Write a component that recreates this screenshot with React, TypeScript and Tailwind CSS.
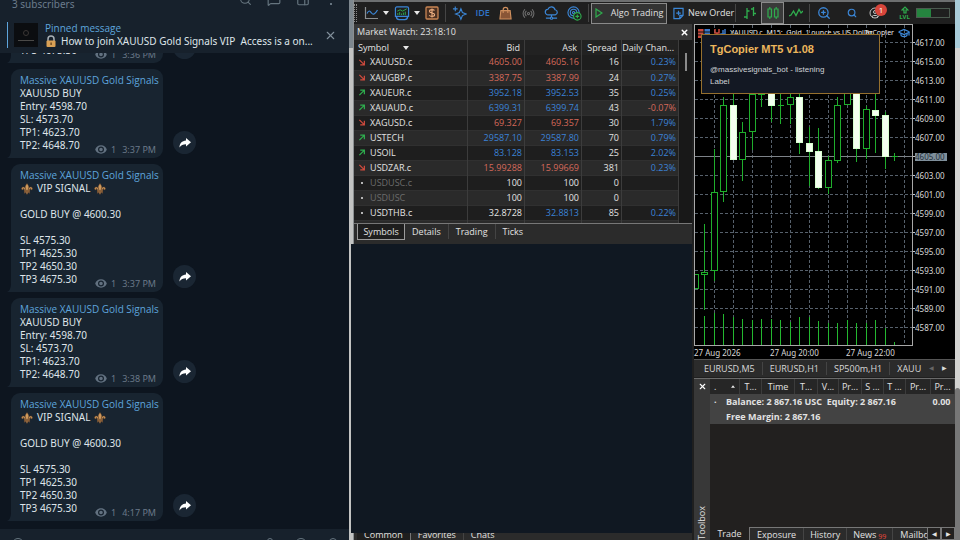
import React from "react";
import {
  GraduationCap,
  MessageSquare,
  PanelRight,
  Radio,
  Search,
  X,
  ZoomIn,
  CircleUser,
} from "lucide-react";

type Message = { kind: "buy" | "vip"; time: string };

const messages: Message[] = [
  { kind: "vip", time: "3:36 PM" },
  { kind: "buy", time: "3:37 PM" },
  { kind: "vip", time: "3:37 PM" },
  { kind: "buy", time: "3:38 PM" },
  { kind: "vip", time: "4:17 PM" },
];

const buyLines = ["XAUUSD BUY", "Entry: 4598.70", "SL: 4573.70", "TP1: 4623.70", "TP2: 4648.70"];
const vipLines = ["", "GOLD BUY @ 4600.30", "", "SL 4575.30", "TP1 4625.30", "TP2 4650.30", "TP3 4675.30"];

function Fleur() {
  return (
    <svg viewBox="0 0 24 24" className="h-3 w-3 shrink-0" fill="#d09a5c" stroke="#6d4525" strokeWidth="0.8" aria-hidden="true">
      <path d="M12 1c-2 3-3.500 5-3.500 7.500 0 2.500 1.500 4 2 6.500h3c.5-2.500 2-4 2-6.500C15.500 6 14 4 12 1z" />
      <path d="M9.500 15C9 11 7.500 8 4.500 8 2 8 .8 10 1.200 12c.4 1.600 2.300 2 3.300.8.6-.8 0-1.800-.8-1.600C5.500 10 7 12 7 15z" />
      <path d="M14.500 15c.5-4 2-7 5-7 2.500 0 3.700 2 3.300 4-.4 1.600-2.300 2-3.300.8-.6-.8 0-1.800.8-1.600C18.500 10 17 12 17 15z" />
      <path d="M6.500 15h11v2.200h-11zM10.500 17.200h3c0 2 .5 3.300-1.500 5.800-2-2.500-1.500-3.800-1.500-5.800zM9.500 17.200c0 2-1 3.500-3 3.500.8-1 1-2 1-3.500zM14.500 17.200c0 2 1 3.500 3 3.500-.8-1-1-2-1-3.500z" />
    </svg>
  );
}

function Bubble({ kind, time }: Message) {
  return (
    <article className="flex items-end gap-2.5 pl-[11px]">
      <div className="relative w-[152px] rounded-t-[9px] rounded-br-[9px] bg-[#182430] px-[9px] pt-[5px] pb-[6px] leading-[13px] text-[#dfe5ea]">
        <svg viewBox="0 0 6 8" className="absolute bottom-0 -left-1 h-2 w-1.5" fill="#182430" aria-hidden="true">
          <path d="M4 0v8H0c2.500-1 4-4 4-8z" />
        </svg>
        <h2 className="whitespace-nowrap font-['Open_Sans','Noto_Sans',sans-serif] font-medium text-[#5ea5dc]">Massive XAUUSD Gold Signals</h2>
        {kind === "vip" && (
          <p className="flex h-[13px] items-center gap-1 pl-px">
            <Fleur /> VIP SIGNAL <Fleur />
          </p>
        )}
        {(kind === "vip" ? vipLines : buyLines).map((line, i) => (
          <p key={i} className="h-[13px] whitespace-nowrap">
            {line}
          </p>
        ))}
        <p className="absolute right-[7px] bottom-[2px] flex items-center gap-1 text-[9px] text-[#6a7988]">
          <svg viewBox="0 0 12 9" className="h-[9px] w-3" aria-hidden="true">
            <path
              fill="#627180"
              fillRule="evenodd"
              d="M6 0.300C3 .3 1 2.200.2 4.500 1 6.800 3 8.700 6 8.700s5-1.900 5.800-4.200C11 2.200 9 .3 6 .3zM6 7.500a3 3 0 1 1 0-6 3 3 0 0 1 0 6zM6 2.700a1.800 1.800 0 1 0 0 3.600 1.800 1.800 0 0 0 0-3.600z"
            />
          </svg>
          <span>1</span>
          <time className="pl-0.5">{time}</time>
        </p>
      </div>
      <button aria-label="Forward" className="mb-1 flex h-[23px] w-[23px] items-center justify-center rounded-full bg-[#1a2633]">
        <svg viewBox="0 0 12 10" className="h-2.5 w-3" fill="#fff" aria-hidden="true">
          <path d="M7 0l5 4.300L7 8.600V6.200C4 6.200 2 7 .5 9.500.5 5.500 3 2.800 7 2.500z" />
        </svg>
      </button>
    </article>
  );
}

function Chat() {
  return (
    <section className="flex h-full min-w-0 flex-col overflow-hidden bg-[#0d151f] font-['Noto_Sans','Open_Sans',sans-serif] text-[10px]">
      <header className="flex h-[17px] shrink-0 items-start bg-[#17212c] pr-3 pl-3">
        <p className="-mt-1 flex-1 leading-[16px] text-[#6b7c8c]">3 subscribers</p>
        <div className="-mt-2.5 flex gap-[15px] pt-0.5 text-[#66757f]">
          <button aria-label="Search"><Search className="h-[13px] w-[13px]" /></button>
          <button aria-label="Discuss"><MessageSquare className="h-[15px] w-[14px]" /></button>
          <button aria-label="Side panel"><PanelRight className="h-[15px] w-[14px]" /></button>
          <button aria-label="More" className="flex h-[13px] w-3 items-end justify-center">
            <span className="h-[2px] w-[2px] rounded-full bg-[#82909c]" />
          </button>
        </div>
      </header>
      <div className="flex h-9 shrink-0 items-center bg-[#17212c] pr-3 pl-[7px]">
        <span className="h-[26px] w-px shrink-0 bg-[#5ea5dc]" />
        <span className="ml-1.5 flex h-6 w-6 shrink-0 flex-col items-center justify-center gap-1 bg-[#0b0d10]">
          <span className="h-1.5 w-1.5 rounded-sm border border-[#3a3634]" />
          <span className="h-px w-4 bg-[#4b4a48]" />
        </span>
        <div className="ml-[7px] min-w-0 flex-1 pb-px leading-[13px]">
          <h1 className="font-['Open_Sans','Noto_Sans',sans-serif] font-medium text-[#5ea5dc]">Pinned message</h1>
          <p className="flex items-center gap-1 whitespace-pre text-[#dfe5ea]">
            <svg viewBox="0 0 12 13" className="h-[13px] w-3 shrink-0" aria-hidden="true">
              <path d="M3 6V4a3 3 0 0 1 6 0v2" fill="none" stroke="#a9b0b5" strokeWidth="1.500" />
              <rect x="1.500" y="5.500" width="9" height="6.500" rx="1" fill="#d9a055" />
              <rect x="5.500" y="7.500" width="1.200" height="2.500" fill="#5b3a17" />
            </svg>
            How to join XAUUSD Gold Signals VIP  Access is a on...
          </p>
        </div>
        <button aria-label="Close pinned message" className="text-[#82909c]">
          <X className="h-[13px] w-[13px]" strokeWidth={2} />
        </button>
      </div>
      <div className="flex min-h-0 flex-1 flex-col justify-end gap-[6px] overflow-hidden pb-2">
        {messages.map((m, i) => (
          <Bubble key={i} {...m} />
        ))}
      </div>
      <footer className="flex h-[11px] shrink-0 items-start justify-between overflow-hidden bg-[#17212c] px-3 pt-[9px]">
        <span className="h-3 w-3 rounded-full border border-[#66757f]" />
        <span className="flex gap-[22px]">
          <span className="h-3 w-1.5 rounded-full border border-[#66757f]" />
          <span className="h-3 w-3 rounded-full border border-[#66757f]" />
          <span className="h-3 w-2 rounded-full border border-[#66757f]" />
        </span>
      </footer>
    </section>
  );
}

function Sep() {
  return <span className="mx-0.5 h-[18px] w-px shrink-0 bg-[#454545]" />;
}

function Tool({ label, children, active }: { label: string; children: React.ReactNode; active?: boolean }) {
  return (
    <button
      aria-label={label}
      className={
        "flex h-[22px] w-[23px] shrink-0 items-center justify-center " +
        (active ? "border border-[#8a8a8a] bg-[#3a3a3a]" : "")
      }
    >
      {children}
    </button>
  );
}

function Caret() {
  return (
    <svg viewBox="0 0 6 4" className="h-1 w-1.5 shrink-0" fill="#e8e8e8" aria-hidden="true">
      <path d="M0 0h6L3 4z" />
    </svg>
  );
}

function Toolbar() {
  return (
    <div role="toolbar" className="flex h-6 shrink-0 items-center border-t-2 border-[#6d6f70] bg-[#1f1f1f] text-[9px] text-[#e0e0e0]">
      <span className="h-[18px] w-[3px] shrink-0 border-x border-dotted border-[#8a8a8a]" />
      <button aria-label="Chart type" className="flex w-8 shrink-0 items-center justify-end gap-1">
        <svg viewBox="0 0 16 14" className="h-[14px] w-4" fill="none" strokeWidth="1.200">
          <path d="M2.500 1v11.500H15" stroke="#8b8f92" />
          <path d="M4 7.500c2-4 3-2.500 4.500-.5S12 8.500 14.500 4" stroke="#3b86d6" />
        </svg>
        <Caret />
      </button>
      <button aria-label="Indicators" className="flex w-[31px] shrink-0 items-center justify-end gap-1">
        <svg viewBox="0 0 16 16" className="h-[15px] w-4" fill="none">
          <path d="M1 2.500A1.500 1.500 0 0 1 2.500 1h11A1.500 1.500 0 0 1 15 2.500V11H1z" stroke="#3b86d6" strokeWidth="1.300" />
          <path d="M2 11c0 2 1 3.500 3 3.500h6c2 0 3-1.500 3-3.500" stroke="#3b86d6" strokeWidth="1.500" />
          <path d="M3 5.500l3-1.500 2.500 1.500L13 3M3.500 9.500v-2M5.500 9.500v-3M7.500 9.500V8M9.500 9.500V7M11.500 9.500V6" stroke="#2fae4e" />
        </svg>
        <Caret />
      </button>
      <Tool label="Market">
        <svg viewBox="0 0 14 14" className="h-[14px] w-[14px]">
          <rect x="1" y="1" width="12" height="12" rx="1" fill="#4a3021" stroke="#c98553" strokeWidth="1.300" />
          <path d="M9.500 4.500C9 3.800 8 3.600 7 3.600c-1.400 0-2.500.5-2.500 1.700C4.500 7.800 9.600 6.300 9.600 8.800c0 1.200-1.200 1.700-2.600 1.700-1.200 0-2.200-.4-2.700-1.200M7 2.400v9.200" fill="none" stroke="#f0b183" strokeWidth="1.100" />
        </svg>
      </Tool>
      <Sep />
      <Tool label="AI assistant">
        <svg viewBox="0 0 16 16" className="h-[15px] w-[15px]" fill="none" stroke="#3b86d6" strokeWidth="1.200">
          <path d="M9.500 3l1.600 4 4 1.600-4 1.600-1.600 4-1.600-4-4-1.600 4-1.600zM3.500.5v5M1 3h5" />
        </svg>
      </Tool>
      <Tool label="IDE"><span className="text-[9px] font-semibold text-[#2f74c8]">IDE</span></Tool>
      <Tool label="Shop">
        <svg viewBox="0 0 14 15" className="h-[14px] w-[13px]">
          <path d="M2 5h10l1 9H1z" fill="#8a5636" stroke="#d0905e" strokeWidth="1.200" />
          <path d="M4.500 7.500V4a2.500 2.500 0 0 1 5 0v3.500" fill="none" stroke="#d0905e" strokeWidth="1.200" />
        </svg>
      </Tool>
      <Tool label="Signals"><Radio className="h-[13px] w-[13px] text-[#6c6c6c]" /></Tool>
      <Tool label="Virtual hosting">
        <svg viewBox="0 0 16 15" className="h-[14px] w-[15px]" fill="none" stroke="#3b86d6" strokeWidth="1.300">
          <path d="M4.500 9.500a3 3 0 0 1-.3-6A4 4 0 0 1 11.800 4a2.800 2.800 0 0 1 .2 5.500zM8 9.500v2.500M2 13h4.500M9.500 13H14" />
          <circle cx="8" cy="13" r="1.200" />
        </svg>
      </Tool>
      <Tool label="Network">
        <svg viewBox="0 0 16 16" className="h-[15px] w-[15px]" fill="none" stroke="#3b86d6" strokeWidth="1.200">
          <circle cx="7" cy="7" r="6" />
          <circle cx="7" cy="7" r="3.500" />
          <circle cx="7" cy="7" r="1.200" />
          <circle cx="11" cy="11" r="4" fill="#1f1f1f" stroke="#2fae4e" />
          <path d="M11 9v4M9 11h4" stroke="#2fae4e" />
        </svg>
      </Tool>
      <Sep />
      <button className="flex h-[21px] w-[76px] shrink-0 items-center justify-center gap-2 whitespace-nowrap border border-[#8a8a8a] bg-[#333]">
        <svg viewBox="0 0 8 10" className="h-2.5 w-2" fill="none" stroke="#2fae4e" strokeWidth="1.200">
          <path d="M1 1l6 4-6 4z" />
        </svg>
        Algo Trading
      </button>
      <button className="flex w-[66px] shrink-0 items-center gap-1 whitespace-nowrap pl-1.5">
        <svg viewBox="0 0 12 13" className="h-[13px] w-[11px] shrink-0" fill="none" stroke="#3b86d6" strokeWidth="1.300">
          <path d="M1 1h10v7.500L7.500 12H1zM11 8.500H7.500V12M6 3.500v5M3.500 6h5" />
        </svg>
        New Order
      </button>
      <Sep />
      <Tool label="Bars">
        <svg viewBox="0 0 14 14" className="h-[14px] w-[14px]" fill="none" stroke="#2fae4e" strokeWidth="1.300">
          <path d="M4 2v11M1 11h3M4 5h2.500M10.500 1v9M8 3h2.500M10.500 7.500H13" />
        </svg>
      </Tool>
      <Tool label="Candlesticks" active>
        <svg viewBox="0 0 14 14" className="h-[14px] w-[14px]" fill="none" stroke="#2fae4e" strokeWidth="1.200">
          <path d="M2 3h3.500v8H2zM8.500 3H12v8H8.500zM3.800 1v2M3.800 11v2M10.200 1v2M10.200 11v2" />
        </svg>
      </Tool>
      <Tool label="Line">
        <svg viewBox="0 0 14 10" className="h-2.5 w-[14px]" fill="none" stroke="#2fae4e" strokeWidth="1.300">
          <path d="M0 8l2-1 2.500-4L7 7.500l3-6L12 5l2-2" />
        </svg>
      </Tool>
      <Sep />
      <Tool label="Zoom in"><ZoomIn className="h-[14px] w-[14px] text-[#3b86d6]" strokeWidth={2.200} /></Tool>
      <span className="flex-1" />
      <Tool label="Search"><Search className="h-2.5 w-2.5 text-[#3b86d6]" strokeWidth={2.800} /></Tool>
      <button aria-label="Account, 1 notification" className="relative flex h-[22px] w-[30px] shrink-0 items-center pl-1.5">
        <CircleUser className="h-3 w-3 text-[#c4c4c4]" />
        <span className="absolute top-0.5 left-3 h-3 w-3 rounded-full bg-[#d8453a] text-center text-[8px] leading-[12px] text-white">1</span>
      </button>
      <button aria-label="Level" className="flex w-[23px] shrink-0 flex-col items-center text-[6px] leading-[6px] font-bold text-[#2fae4e]">
        <svg viewBox="0 0 8 8" className="h-2 w-2" fill="none" stroke="#2fae4e" strokeWidth="1.200">
          <path d="M1 4l3-3 3 3H5v3H3V4z" />
        </svg>
        LVL
      </button>
      <span className="mr-[5px] h-[10px] w-[34px] shrink-0 border border-[#4c5a50]">
        <span className="block h-full w-[14px] bg-[#25843f]" />
      </span>
    </div>
  );
}

type Quote = [dir: "up" | "down" | "none", symbol: string, bid: string, ask: string, spread: string, change: string, bidTone: string, askTone: string];

const R = "text-[#d5695a]";
const B = "text-[#3b82d6]";
const W = "text-[#e6e6e6]";

const quotes: Quote[] = [
  ["down", "XAUUSD.c", "4605.00", "4605.16", "16", "0.23%", R, R],
  ["down", "XAUGBP.c", "3387.75", "3387.99", "24", "0.27%", R, R],
  ["up", "XAUEUR.c", "3952.18", "3952.53", "35", "0.25%", B, B],
  ["up", "XAUAUD.c", "6399.31", "6399.74", "43", "-0.07%", B, B],
  ["down", "XAGUSD.c", "69.327", "69.357", "30", "1.79%", R, R],
  ["up", "USTECH", "29587.10", "29587.80", "70", "0.79%", B, B],
  ["up", "USOIL", "83.128", "83.153", "25", "2.02%", B, B],
  ["down", "USDZAR.c", "15.99288", "15.99669", "381", "0.23%", R, R],
  ["none", "USDUSC.c", "100", "100", "0", "", W, W],
  ["none", "USDUSC", "100", "100", "0", "", W, W],
  ["none", "USDTHB.c", "32.8728", "32.8813", "85", "0.22%", W, B],
  ["down", "USDSGD.c", "1.27124", "1.27118", "14", "-0.01%", W, R],
];

function Direction({ dir }: { dir: Quote[0] }) {
  if (dir === "none") return <span className="mx-[3px] h-[2px] w-[2px] shrink-0 bg-[#b5b5b5]" />;
  return (
    <svg
      viewBox="0 0 8 8"
      className="h-[7px] w-2 shrink-0"
      fill="none"
      stroke={dir === "up" ? "#2fae4e" : "#cf4b3d"}
      strokeWidth="1.400"
      aria-label={dir}
    >
      <path d={dir === "up" ? "M1 7l5.500-5.500M2 1.300h4.700V6" : "M1 1l5.500 5.500M2 6.700h4.700V2"} />
    </svg>
  );
}

function MarketWatch() {
  const tabs = ["Details", "Trading", "Ticks"];
  return (
    <section className="flex h-full min-w-0 flex-col bg-[#2b2b2b] text-[9px] text-[#e2e2e2]">
      <header className="flex h-4 shrink-0 items-center justify-between bg-[#383838] pr-[3px] pl-[3px]">
        <h1>Market Watch: 23:18:10</h1>
        <button aria-label="Close Market Watch"><X className="h-[9px] w-[9px] text-white" strokeWidth={4} /></button>
      </header>
      <div className="flex h-[184px] shrink-0 overflow-hidden border-b border-[#777] bg-[#1c1c1c]">
        <div className="min-w-0 flex-1">
          <table className="w-full table-fixed border-collapse">
            <colgroup>
              <col />
              <col className="w-[57px]" />
              <col className="w-[57px]" />
              <col className="w-[40px]" />
              <col className="w-[57px]" />
            </colgroup>
            <thead>
              <tr className="h-[15px] bg-[#222] text-right [&>th]:border-r [&>th]:border-[#3c3c3c] [&>th]:p-0 [&>th]:pr-1 [&>th]:leading-[14px] [&>th]:font-normal [&>th]:whitespace-nowrap">
                <th className="text-left">
                  <span className="flex items-center gap-3.5 pl-1">Symbol <Caret /></span>
                </th>
                <th>Bid</th>
                <th>Ask</th>
                <th>Spread</th>
                <th>Daily Chan...</th>
              </tr>
            </thead>
            <tbody>
              {quotes.map(([dir, symbol, bid, ask, spread, change, bt, at], i) => (
                <tr
                  key={symbol}
                  className={
                    "h-[15px] border-b border-[#303030] text-right [&>td]:border-r [&>td]:border-[#3c3c3c] [&>td]:p-0 [&>td]:pr-0.5 [&>td]:leading-[14px] " +
                    (i % 2 ? "bg-[#2a2a2a]" : "bg-[#1e1e1e]")
                  }
                >
                  <td>
                    <span className={"flex items-center gap-1 pl-1 " + (symbol.startsWith("USDUSC") ? "text-[#6c6c6c]" : "")}>
                      <Direction dir={dir} />
                      {symbol}
                    </span>
                  </td>
                  <td className={bt}>{bid}</td>
                  <td className={at}>{ask}</td>
                  <td>{spread}</td>
                  <td className={change.startsWith("-") ? R : B}>{change}</td>
                </tr>
              ))}
            </tbody>
          </table>
        </div>
        <div className="flex w-[13px] shrink-0 justify-center bg-[#181818] pt-[13px]">
          <span className="h-[18px] w-[2px] bg-[#8a8a8a]" />
        </div>
      </div>
      <nav className="flex h-5 shrink-0 items-start pl-[3px]">
        <button className="h-4 w-12 border border-t-0 border-[#9a9a9a] bg-[#1e1e1e] leading-[14px]">Symbols</button>
        {tabs.map((t) => (
          <button key={t} className="border-r border-[#444] px-[7px] leading-[15px] last:border-0">
            {t}
          </button>
        ))}
      </nav>
      <div className="-ml-[3px] min-h-0 flex-1 bg-[#101822]" />
      <nav className="flex h-[7px] shrink-0 items-end overflow-hidden bg-[#2b2b2b] pl-[3px] leading-[11px]">
        <button className="border-r border-[#777] bg-[#1e1e1e] px-[7px]">Common</button>
        <button className="border-r border-[#444] px-[7px]">Favorites</button>
        <button className="px-[7px]">Chats</button>
      </nav>
    </section>
  );
}

type Candle = [x: number, high: number, top: number, bottom: number, low: number, filled?: boolean];

const candles: Candle[] = [
  [0, 249, 249, 264, 264],
  [9, 199, 247, 250, 285],
  [19, 124, 167, 246, 256],
  [28, 72, 80, 167, 177],
  [38, 66, 80, 135, 135, true],
  [47, 97, 107, 135, 156],
  [57, 60, 69, 107, 125],
  [66, 60, 62, 70, 82],
  [76, 60, 66, 81, 97, true],
  [85, 66, 80, 80, 99],
  [95, 66, 72, 80, 99],
  [104, 66, 72, 118, 129, true],
  [114, 102, 118, 127, 161, true],
  [123, 103, 126, 163, 164, true],
  [133, 131, 135, 163, 169],
  [142, 72, 80, 136, 138],
  [152, 60, 66, 80, 80],
  [161, 60, 66, 124, 137, true],
  [171, 81, 84, 124, 134],
  [180, 68, 85, 91, 128, true],
  [190, 87, 90, 132, 144, true],
  [199, 128, 131, 131, 136],
];

const volumes = [29, 32, 31, 28, 26, 25, 26, 26, 25, 23, 28, 28, 24, 22, 22, 25, 22, 22, 25, 17, 3];
const prices = Array.from({ length: 16 }, (_, i) => 4617 - i * 2);

function Plot() {
  return (
    <svg viewBox="0 0 217 320" className="h-[320px] w-[217px]" shapeRendering="crispEdges" role="img" aria-label="XAUUSD.c M15 candlestick chart">
      <g stroke="#56606b" strokeDasharray="3 2">
        {Array.from({ length: 11 }, (_, i) => (
          <path key={"v" + i} d={`M${19.5 + i * 19} 0V320`} />
        ))}
        {prices.map((p, i) => (
          <path key={p} d={`M0 ${17.5 + i * 19}H217`} />
        ))}
      </g>
      <path d="M0 131.500H217" stroke="#7d8288" />
      {candles.map(([x, high, top, bottom, low, filled]) => (
        <g key={x} stroke="#1fae2c">
          <path d={`M${x + 0.5} ${high}V${top}M${x + 0.5} ${bottom}V${low}`} />
          {top === bottom ? (
            <path d={`M${x - 2} ${top + 0.5}h6`} />
          ) : (
            <rect
              x={x - 2.5}
              y={top + 0.5}
              width="6"
              height={bottom - top - 1}
              fill={filled ? "#f4fff0" : "#000"}
              stroke={filled ? "#d8ffd0" : "#1fae2c"}
            />
          )}
        </g>
      ))}
      {volumes.map((v, i) => (
        <path key={i} d={`M${Math.floor(9.5 + i * 9.5) + 0.5} 320v-${v}`} stroke="#23b82f" />
      ))}
    </svg>
  );
}

function ChartPanel() {
  return (
    <section className="relative shrink-0 bg-black font-['Noto_Sans',sans-serif] text-[8px] text-[#d8d8d8]">
      <div className="flex">
        <div className="border border-[#a8a8a8]">
          <Plot />
        </div>
        <ol className="flex h-[322px] flex-col pt-[9px]">
          {prices.map((p) => (
            <li key={p} className="flex h-[19px] items-center">
              <span className="h-px w-[2px] bg-[#c8c8c8]" />
              <span className={p === 4605 ? "bg-[#7f8f9b] pr-0.5 leading-[8px] text-[#25303a]" : "leading-[8px]"}>{p}.00</span>
            </li>
          ))}
        </ol>
      </div>
      <div className="grid w-[228px] grid-cols-3 pt-px leading-[12px] whitespace-nowrap">
        <time>27 Aug 2026</time>
        <time>27 Aug 20:00</time>
        <time>27 Aug 22:00</time>
      </div>
      <div className="absolute top-[3px] left-1 flex w-[212px] items-center gap-1 leading-[12px] whitespace-nowrap text-[#e8e8e8]">
        <svg viewBox="0 0 12 9" className="h-[9px] w-3 shrink-0" aria-hidden="true">
          <path d="M0 0h5.500v9H0z" fill="#c9493d" />
          <path d="M6.500 0H12v9H6.500z" fill="#3b78c9" />
          <path d="M0 3h12M0 6h12" stroke="#111" />
        </svg>
        <svg viewBox="0 0 12 9" className="h-[9px] w-3 shrink-0" fill="none" strokeWidth="1.500" aria-hidden="true">
          <path d="M1 0v4h4V0M3 4v5" stroke="#c9493d" />
          <path d="M7 9V5h4V0M9 5V1" stroke="#3b78c9" />
        </svg>
        <h2 className="min-w-0 flex-1 text-[7px]">XAUUSD.c, M15:&nbsp; Gold, 1 ounce vs US Dollar</h2>
        <span className="text-[7px]">TgCopier</span>
        <GraduationCap className="h-3 w-3 shrink-0 text-[#3b86d6]" strokeWidth={2.500} />
      </div>
      <aside className="absolute top-[10px] left-[7px] h-[60px] w-[179px] border border-[#96702e] bg-[#131823] px-2 font-['Liberation_Sans',Arial,sans-serif] text-[#cfd2d6]">
        <h3 className="pt-2 text-[11px] leading-[13px] font-bold text-[#ecb65c]">TgCopier MT5 v1.08</h3>
        <p className="pt-2 leading-[12px]">@massivesignals_bot - listening</p>
        <p className="leading-[12px]">Label</p>
      </aside>
    </section>
  );
}

const columns: [string, string][] = [
  ["T...", "w-[22px]"],
  ["Time", "w-[33px]"],
  ["T...", "w-[23px]"],
  ["V...", "w-[21px]"],
  ["Pr...", "w-[23px]"],
  ["S ...", "w-[22px]"],
  ["T ...", "w-[22px]"],
  ["Pr...", "w-[25px]"],
  ["Pr...", "w-[24px]"],
];

function Toolbox() {
  return (
    <section className="flex min-h-0 flex-1 border-t border-[#6a6a6a] text-[9px] text-[#e2e2e2]">
      <div className="flex w-4 shrink-0 flex-col items-center justify-between bg-[#383838] pt-[3px]">
        <button aria-label="Close Toolbox"><X className="h-[9px] w-[9px] text-white" strokeWidth={3} /></button>
        <h2 className="rotate-180 leading-[12px] [writing-mode:vertical-rl]">Toolbox</h2>
      </div>
      <div className="flex min-w-0 flex-1 flex-col bg-[#22201f]">
        <table className="w-full table-fixed border-collapse">
          <thead>
            <tr className="h-[15px] bg-[#262626] text-center [&>th]:border-r [&>th]:border-[#3c3c3c] [&>th]:p-0 [&>th]:leading-[14px] [&>th]:font-normal [&>th]:whitespace-nowrap">
              <th>
                <span className="flex items-center justify-between px-1">
                  .
                  <svg viewBox="0 0 6 4" className="h-[3px] w-1" fill="#e8e8e8" aria-hidden="true"><path d="M0 4h6L3 0z" /></svg>
                </span>
              </th>
              {columns.map(([name, width], i) => (
                <th key={i} className={width}>{name}</th>
              ))}
            </tr>
          </thead>
          <tbody>
            <tr className="bg-[#434343] align-top font-bold">
              <td colSpan={9} className="p-0 pl-1 whitespace-pre leading-[15px]">
                <div className="flex"><span className="w-3">·</span>Balance: 2 867.16 USC  Equity: 2 867.16</div>
                <div className="pl-3">Free Margin: 2 867.16</div>
              </td>
              <td className="p-0 pr-1 text-right leading-[15px]">0.00</td>
            </tr>
          </tbody>
        </table>
        <nav className="mt-auto flex h-[13px] shrink-0 overflow-hidden leading-[13px] whitespace-nowrap">
          <button className="w-10 shrink-0 border-r border-[#777]">Trade</button>
          <div className="flex min-w-0 flex-1 overflow-hidden border-t border-[#777] bg-[#2b2b2b]">
            <button className="border-r border-[#444] px-[7px]">Exposure</button>
            <button className="border-r border-[#444] px-1.5">History</button>
            <button className="flex border-r border-[#444] px-1.5">
              News <span className="pt-0.5 pl-0.5 text-[7px] text-[#f0483a]">99</span>
            </button>
            <button className="px-[7px]">Mailbox</button>
          </div>
          <button aria-label="Scroll left" className="w-[14px] shrink-0 border border-[#777] text-[6px] leading-[10px]">◀</button>
          <button aria-label="Scroll right" className="w-[14px] shrink-0 border border-[#777] text-[6px] leading-[10px]">▶</button>
        </nav>
      </div>
    </section>
  );
}

export default function App() {
  const charts = ["EURUSD,M5", "EURUSD,H1", "SP500m,H1", "XAUU"];
  return (
    <main className="grid h-screen grid-cols-[4fr_7fr] overflow-hidden bg-[#d0d0ce]">
      <Chat />
      <div className="grid min-h-0 min-w-0 grid-cols-[5px_1fr_5px]">
        <div className="border-r border-[#8b8f91] bg-[#c2c3c2]">
          <div className="h-12 bg-[#7d878e]" />
        </div>
        <div className="flex min-h-0 min-w-0 flex-col bg-[#1f1f1f] font-['Open_Sans','Noto_Sans',sans-serif]">
          <Toolbar />
          <div className="grid min-h-0 flex-1 grid-cols-[1fr_261px] gap-[2px]">
            <MarketWatch />
            <div className="flex min-h-0 flex-col">
              <ChartPanel />
              <nav className="mb-px flex h-[18px] shrink-0 items-center overflow-hidden border-t border-[#555] bg-[#2b2b2b] pl-[3px] text-[9px] whitespace-nowrap text-[#d8d8d8]">
                {charts.map((c) => (
                  <button key={c} className="border-r border-[#444] px-[7px] leading-[13px] last-of-type:border-0">{c}</button>
                ))}
                <span className="ml-auto flex gap-2 pr-2 text-[6px]"><span className="text-[#666]">◀</span><span>▶</span></span>
              </nav>
              <Toolbox />
            </div>
          </div>
        </div>
        <div className="flex flex-col bg-[#d3d3d1]">
          <div className="h-12 bg-[#a9ccd9]" />
          <div className="mt-[340px] flex-1 rounded-t-sm bg-[#777]" />
        </div>
      </div>
    </main>
  );
}
